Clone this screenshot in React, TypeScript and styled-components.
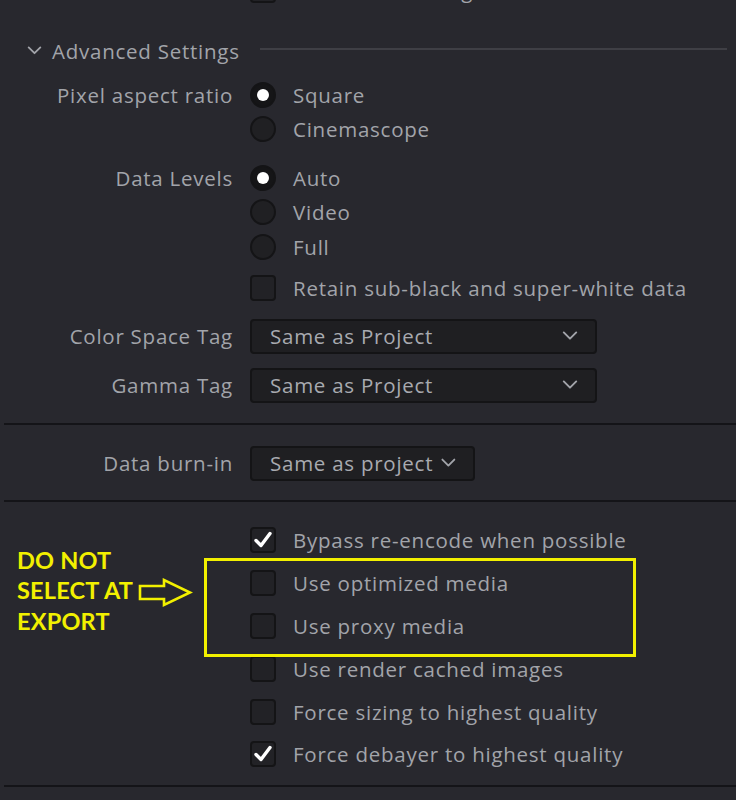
import React from "react";
import styled, { createGlobalStyle } from "styled-components";

const Global = createGlobalStyle`
  html, body {
    margin: 0;
    padding: 0;
    background: #28282e;
  }
  body {
    font-family: "Open Sans", "Noto Sans", sans-serif;
    color: #a2a4aa;
    overflow: hidden;
  }
`;

const Page = styled.div`
  width: 736px;
  height: 800px;
  overflow: hidden;
  background: #28282e;
  display: flex;
  flex-direction: column;
  font-size: 20.5px;
  letter-spacing: 0.75px;
`;

const Section = styled.section<{ $pt?: number }>`
  display: flex;
  flex-direction: column;
  padding-top: ${(p) => p.$pt ?? 0}px;
  position: relative;
`;

const Row = styled.div<{ $mt?: number }>`
  display: grid;
  grid-template-columns: 233px 1fr;
  column-gap: 17px;
  align-items: start;
  margin-top: ${(p) => p.$mt ?? 0}px;
`;

const Label = styled.div<{ $h?: number }>`
  text-align: right;
  line-height: ${(p) => p.$h ?? 34.5}px;
  white-space: nowrap;
`;

const Options = styled.div`
  display: flex;
  flex-direction: column;
`;

const Option = styled.label<{ $h?: number }>`
  display: flex;
  align-items: center;
  gap: 17px;
  height: ${(p) => p.$h ?? 34.5}px;
  white-space: nowrap;
`;

const RadioDot = styled.span<{ $on?: boolean }>`
  width: 26px;
  height: 26px;
  border-radius: 50%;
  box-sizing: border-box;
  flex: none;
  display: flex;
  align-items: center;
  justify-content: center;
  background: ${(p) => (p.$on ? "#151517" : "#202023")};
  border: 2px solid #141416;
  &::after {
    content: "";
    display: ${(p) => (p.$on ? "block" : "none")};
    width: 12px;
    height: 12px;
    border-radius: 50%;
    background: #ffffff;
  }
`;

const Box = styled.span`
  width: 26px;
  height: 26px;
  box-sizing: border-box;
  flex: none;
  border-radius: 4px;
  background: #222226;
  border: 2px solid #141416;
  display: flex;
  align-items: center;
  justify-content: center;
`;

const Header = styled.div`
  display: flex;
  align-items: center;
  height: 34px;
  margin-top: 26px;
  padding-left: 27px;
  gap: 10px;
`;

const HeaderRule = styled.div`
  flex: 1;
  height: 2px;
  background: #3f3f45;
  margin-left: 10px;
  margin-right: 9px;
  margin-top: -4px;
`;

const Select = styled.div<{ $w: number; $compact?: boolean }>`
  width: ${(p) => p.$w}px;
  height: 35px;
  box-sizing: border-box;
  border: 2px solid #141416;
  border-radius: 4px;
  background: #1f1f22;
  display: flex;
  align-items: center;
  justify-content: ${(p) => (p.$compact ? "flex-start" : "space-between")};
  gap: 8px;
  padding: 0 17px 0 18px;
  color: #a8aab0;
  white-space: nowrap;
`;

const Rule = styled.div<{ $mt: number }>`
  height: 2px;
  margin-top: ${(p) => p.$mt}px;
  margin-left: 4px;
  background: #141418;
`;

/* Yellow annotation drawn over the render options */
const Callout = styled.div`
  position: absolute;
  left: 204px;
  top: 56px;
  width: 432px;
  height: 99px;
  box-sizing: border-box;
  border: 3px solid #f2f000;
  pointer-events: none;
`;

const Note = styled.div`
  position: absolute;
  left: 17px;
  top: 43px;
  display: flex;
  align-items: center;
  gap: 5px;
`;

const NoteText = styled.div`
  font-family: Lato, "Liberation Sans", sans-serif;
  font-weight: 700;
  font-size: 23.5px;
  line-height: 30.5px;
  color: #f2f000;
  letter-spacing: 0.2px;
`;

const Arrow = styled.svg`
  margin-top: 6px;
`;

const Chevron = ({ size = 16 }: { size?: number }) => (
  <svg width={size} height={size * 0.6} viewBox="0 0 16 10" fill="none">
    <polyline
      points="1.5,1.5 8,8 14.5,1.5"
      stroke="#a2a4aa"
      strokeWidth="2"
      strokeLinecap="round"
      strokeLinejoin="round"
    />
  </svg>
);

const Check = () => (
  <svg width="20" height="18" viewBox="0 0 20 18" fill="none">
    <path
      d="M3 9.5 L8 14.5 L17 2.5"
      stroke="#ffffff"
      strokeWidth="3.4"
      strokeLinecap="round"
      strokeLinejoin="round"
    />
  </svg>
);

type Opt = { text: string; on?: boolean };

const RadioGroup = ({ label, items, mt }: { label: string; items: Opt[]; mt: number }) => (
  <Row $mt={mt}>
    <Label>{label}</Label>
    <Options>
      {items.map((o) => (
        <Option key={o.text}>
          <RadioDot $on={o.on} />
          {o.text}
        </Option>
      ))}
    </Options>
  </Row>
);

const CheckRow = ({ text, on, h = 34.5, mt = 0 }: { text: string; on?: boolean; h?: number; mt?: number }) => (
  <Row $mt={mt}>
    <span />
    <Option $h={h}>
      <Box>{on && <Check />}</Box>
      {text}
    </Option>
  </Row>
);

const SelectRow = ({
  label,
  value,
  w,
  compact,
  mt,
}: {
  label: string;
  value: string;
  w: number;
  compact?: boolean;
  mt: number;
}) => (
  <Row $mt={mt}>
    <Label $h={35}>{label}</Label>
    <Select $w={w} $compact={compact}>
      <span>{value}</span>
      <Chevron />
    </Select>
  </Row>
);

const renderOptions: Opt[] = [
  { text: "Bypass re-encode when possible", on: true },
  { text: "Use optimized media" },
  { text: "Use proxy media" },
  { text: "Use render cached images" },
  { text: "Force sizing to highest quality" },
  { text: "Force debayer to highest quality", on: true },
];

export default function App() {
  return (
    <Page>
      <Global />
      <Section>
        <CheckRow text="Frame reordering" mt={-27} />
        <Header>
          <Chevron size={15} />
          <span>Advanced Settings</span>
          <HeaderRule />
        </Header>
        <RadioGroup
          label="Pixel aspect ratio"
          mt={10}
          items={[{ text: "Square", on: true }, { text: "Cinemascope" }]}
        />
        <RadioGroup
          label="Data Levels"
          mt={14}
          items={[{ text: "Auto", on: true }, { text: "Video" }, { text: "Full" }]}
        />
        <CheckRow text="Retain sub-black and super-white data" mt={7} />
        <SelectRow label="Color Space Tag" value="Same as Project" w={347} mt={13} />
        <SelectRow label="Gamma Tag" value="Same as Project" w={347} mt={14} />
        <Rule $mt={20} />
      </Section>
      <Section>
        <SelectRow label="Data burn-in" value="Same as project" w={225} compact mt={21} />
        <Rule $mt={19} />
      </Section>
      <Section $pt={17.5}>
        {renderOptions.map((o) => (
          <CheckRow key={o.text} text={o.text} on={o.on} h={42.8} />
        ))}
        <Rule $mt={9} />
        <Callout />
        <Note>
          <NoteText>
            DO NOT
            <br />
            SELECT AT
            <br />
            EXPORT
          </NoteText>
          <Arrow width="56" height="30" viewBox="0 0 56 30" fill="none">
            <polygon
              points="2,8 26,8 26,2 52,14.5 26,27 26,21 2,21"
              stroke="#f2f000"
              strokeWidth="2.6"
              strokeLinejoin="miter"
            />
          </Arrow>
        </Note>
      </Section>
    </Page>
  );
}
